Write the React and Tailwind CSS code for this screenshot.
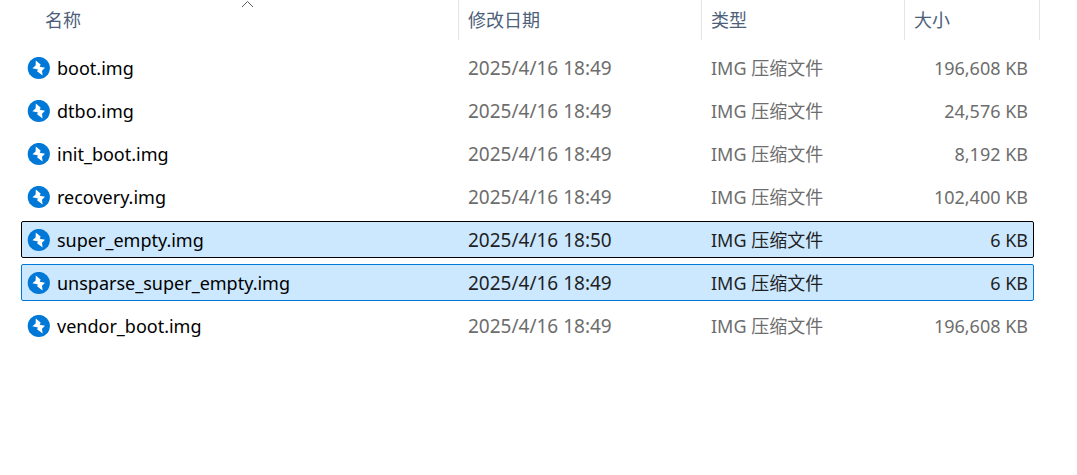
import React, { useState } from "react";

const files = [
  { name: "boot.img", date: "2025/4/16 18:49", size: "196,608 KB" },
  { name: "dtbo.img", date: "2025/4/16 18:49", size: "24,576 KB" },
  { name: "init_boot.img", date: "2025/4/16 18:49", size: "8,192 KB" },
  { name: "recovery.img", date: "2025/4/16 18:49", size: "102,400 KB" },
  { name: "super_empty.img", date: "2025/4/16 18:50", size: "6 KB" },
  { name: "unsparse_super_empty.img", date: "2025/4/16 18:49", size: "6 KB" },
  { name: "vendor_boot.img", date: "2025/4/16 18:49", size: "196,608 KB" },
];

const FileIcon = () => (
  <svg className="size-[23px] shrink-0" viewBox="0 0 23 23" aria-hidden="true">
    <circle cx="11.8" cy="11" r="11.1" fill="#0078d7" />
    <path
      d="M8.8 3.6 L13.6 7.6 L12.8 9.8 L18 10.8 L15 13.8 L15.6 18.6 L10 14.2 L11 12.4 L5.4 11.2 L8.6 8.4 Z"
      fill="#fff"
    />
  </svg>
);

const SortArrow = () => (
  <svg
    className="absolute left-1/2 top-0 h-2 w-4"
    viewBox="0 0 16 8"
    fill="none"
    stroke="#5a5a5a"
    aria-hidden="true"
  >
    <path d="M2 7 L7.5 1.5 L13 7" />
  </svg>
);

const Header = () => (
  <thead className="block">
    <tr className="grid h-10 grid-cols-[minmax(0,1fr)_243px_203px_135px] text-left text-lg leading-10 text-[#4c607a]">
      <th className="relative border-r border-[#e5e5e5] pl-6 font-normal">
        名称
        <SortArrow />
      </th>
      <th className="border-r border-[#e5e5e5] pl-[9px] font-normal">修改日期</th>
      <th className="border-r border-[#e5e5e5] pl-[9px] font-normal">类型</th>
      <th className="border-r border-[#e5e5e5] pl-[9px] font-normal">大小</th>
    </tr>
  </thead>
);

const rowStyle = (isSelected, isFocused) => {
  if (isFocused) return "border-black bg-[#cce8ff] text-[#1f1f1f]";
  if (isSelected) return "border-[#0078d7] bg-[#cce8ff] text-[#1f1f1f]";
  return "border-transparent text-[#6d6d6d]";
};

const App = () => {
  const [selected, setSelected] = useState([
    "super_empty.img",
    "unsparse_super_empty.img",
  ]);
  const [focused, setFocused] = useState("super_empty.img");

  const handleClick = (name) => {
    setSelected([name]);
    setFocused(name);
  };

  return (
    <div className="min-h-screen bg-white pl-[21px] pr-[37px] font-['Noto_Sans','Noto_Sans_CJK_SC',sans-serif]">
      <table className="block cursor-default">
        <Header />
        <tbody className="flex flex-col gap-1.5 pr-1.5 pt-[9px]">
          {files.map((file) => (
            <tr
              key={file.name}
              onClick={() => handleClick(file.name)}
              className={`grid grid-cols-[minmax(0,1fr)_243px_203px_128px] items-center rounded-[2px] border pt-0.5 text-lg leading-[33px] ${rowStyle(
                selected.includes(file.name),
                focused === file.name
              )}`}
            >
              <td className="flex items-center gap-[7px] pl-[5px] text-black">
                <FileIcon />
                <span className="truncate">{file.name}</span>
              </td>
              <td className="pl-[9px] text-[19px] leading-[33px]">{file.date}</td>
              <td className="pl-[9px]">IMG 压缩文件</td>
              <td className="pr-[5px] text-right text-lg leading-[33px]">
                {file.size}
              </td>
            </tr>
          ))}
        </tbody>
      </table>
    </div>
  );
};

export default App;
